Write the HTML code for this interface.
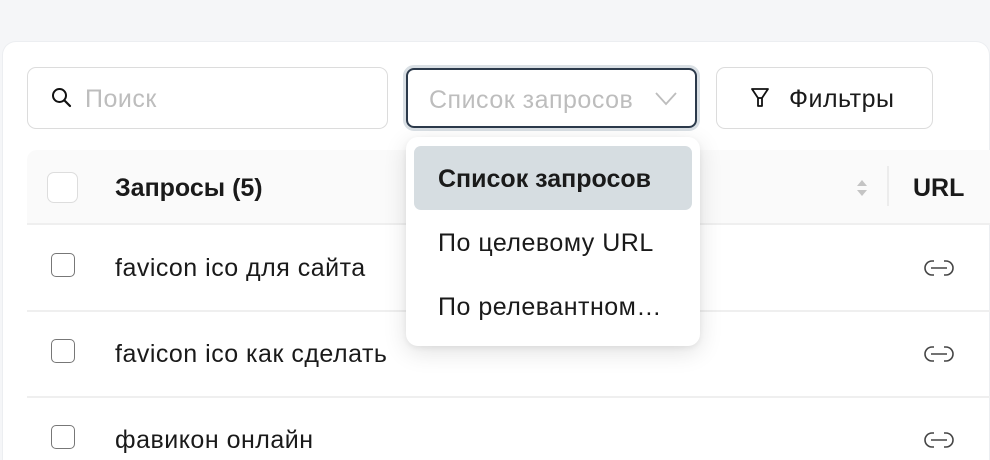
<!DOCTYPE html>
<html><head><meta charset="utf-8"><style>
*{box-sizing:border-box;margin:0;padding:0}
html,body{width:990px;height:460px;overflow:hidden}
body{background:#f5f6f8;font-family:"Liberation Sans",sans-serif;position:relative;color:#1a1a1a}
.card{position:absolute;left:2px;top:41px;width:988px;height:419px;background:#fff;border:1px solid #eceef1;border-bottom:none;border-radius:14px 14px 0 0}
.abs{position:absolute}
.search{left:27px;top:67px;width:361px;height:62px;border:1.5px solid #dcdcdc;border-radius:9px}
.sel{left:403px;top:65px;width:297px;height:66px;border:3px solid #d9dfe4;border-radius:11px}
.sel .in{position:absolute;inset:0;border:2px solid #2c3a4b;border-radius:8px}
.filt{left:716px;top:67px;width:217px;height:62px;border:1.5px solid #dcdcdc;border-radius:9px}
.t{font-size:25px;line-height:26px;letter-spacing:.5px;white-space:nowrap}
.b{font-weight:bold;letter-spacing:0}
.head{left:27px;top:150px;width:963px;height:75px;background:#fafafa;border-bottom:2px solid #efefef;border-radius:10px 0 0 0}
.cb{width:24px;height:24px;border:1.8px solid #777;border-radius:5px;background:#fff}
.line{left:27px;width:963px;height:2px;background:#efefef}
.menu{left:406px;top:137px;width:294px;height:209px;background:#fff;border-radius:12px;box-shadow:0 6px 24px rgba(0,0,0,.12),0 2px 6px rgba(0,0,0,.06)}
.hl{left:8px;top:9px;width:278px;height:64px;background:#d6dde1;border-radius:7px}
</style></head><body>
<div class="card"></div>
<div class="abs search">
<svg class="abs" style="left:22px;top:18px" width="24" height="24" viewBox="0 0 24 24"><circle cx="9.5" cy="9.5" r="6.5" fill="none" stroke="#111" stroke-width="2"/><path d="M14.5 14.5L20 20" stroke="#111" stroke-width="2.2" stroke-linecap="round"/></svg>
<div class="abs t" style="left:57px;top:18px;color:#bdbdbd">Поиск</div></div>
<div class="abs sel"><div class="in"></div>
<div class="abs t" style="left:23px;top:19px;color:#bdbdbd">Список запросов</div>
<svg class="abs" style="left:248px;top:22px" width="24" height="16" viewBox="0 0 24 16"><path d="M2 3L12 14L22 3" fill="none" stroke="#bdbdbd" stroke-width="1.8"/></svg></div>
<div class="abs filt">
<svg class="abs" style="left:33px;top:19px" width="20" height="22" viewBox="0 0 20 22"><path d="M2 2H18L12 11V19H8V11Z M8 11H12" fill="none" stroke="#111" stroke-width="1.8" stroke-linejoin="round"/></svg>
<div class="abs t" style="left:72px;top:18px">Фильтры</div></div>
<div class="abs head">
<div class="abs cb" style="left:20px;top:22px;width:31px;height:31px;border:1.5px solid #ddd;border-radius:7px"></div>
<div class="abs t b" style="left:88px;top:25px">Запросы (5)</div>
<svg class="abs" style="left:829px;top:26px" width="12" height="24" viewBox="0 0 12 24"><path d="M1 10L6 4L11 10Z M1 14L6 20L11 14Z" fill="#c4c4c4"/></svg>
<div class="abs" style="left:860px;top:16px;width:2px;height:40px;background:#ececec"></div>
<div class="abs t b" style="left:886px;top:25px">URL</div>
</div>
<div class="abs line" style="top:310px"></div>
<div class="abs line" style="top:396px"></div>
<div class="abs cb" style="left:51px;top:253px"></div>
<div class="abs cb" style="left:51px;top:339px"></div>
<div class="abs cb" style="left:51px;top:425px"></div>
<div class="abs t" style="left:115px;top:255px">favicon ico для сайта</div>
<div class="abs t" style="left:115px;top:341px">favicon ico как сделать</div>
<div class="abs t" style="left:115px;top:427px">фавикон онлайн</div>
<svg class="abs" style="left:922px;top:257px" width="34" height="22" viewBox="0 0 34 22"><path d="M12 4H10a7 7 0 0 0 0 14h2M22 4h2a7 7 0 0 1 0 14h-2M9 11H25" fill="none" stroke="#444" stroke-width="1.6"/></svg>
<svg class="abs" style="left:922px;top:343px" width="34" height="22" viewBox="0 0 34 22"><path d="M12 4H10a7 7 0 0 0 0 14h2M22 4h2a7 7 0 0 1 0 14h-2M9 11H25" fill="none" stroke="#444" stroke-width="1.6"/></svg>
<svg class="abs" style="left:922px;top:429px" width="34" height="22" viewBox="0 0 34 22"><path d="M12 4H10a7 7 0 0 0 0 14h2M22 4h2a7 7 0 0 1 0 14h-2M9 11H25" fill="none" stroke="#444" stroke-width="1.6"/></svg>
<div class="abs menu">
<div class="abs hl"></div>
<div class="abs t b" style="left:32px;top:29px">Список запросов</div>
<div class="abs t" style="left:32px;top:93px">По целевому URL</div>
<div class="abs t" style="left:32px;top:157px">По релевантном…</div>
</div>
</body></html>
